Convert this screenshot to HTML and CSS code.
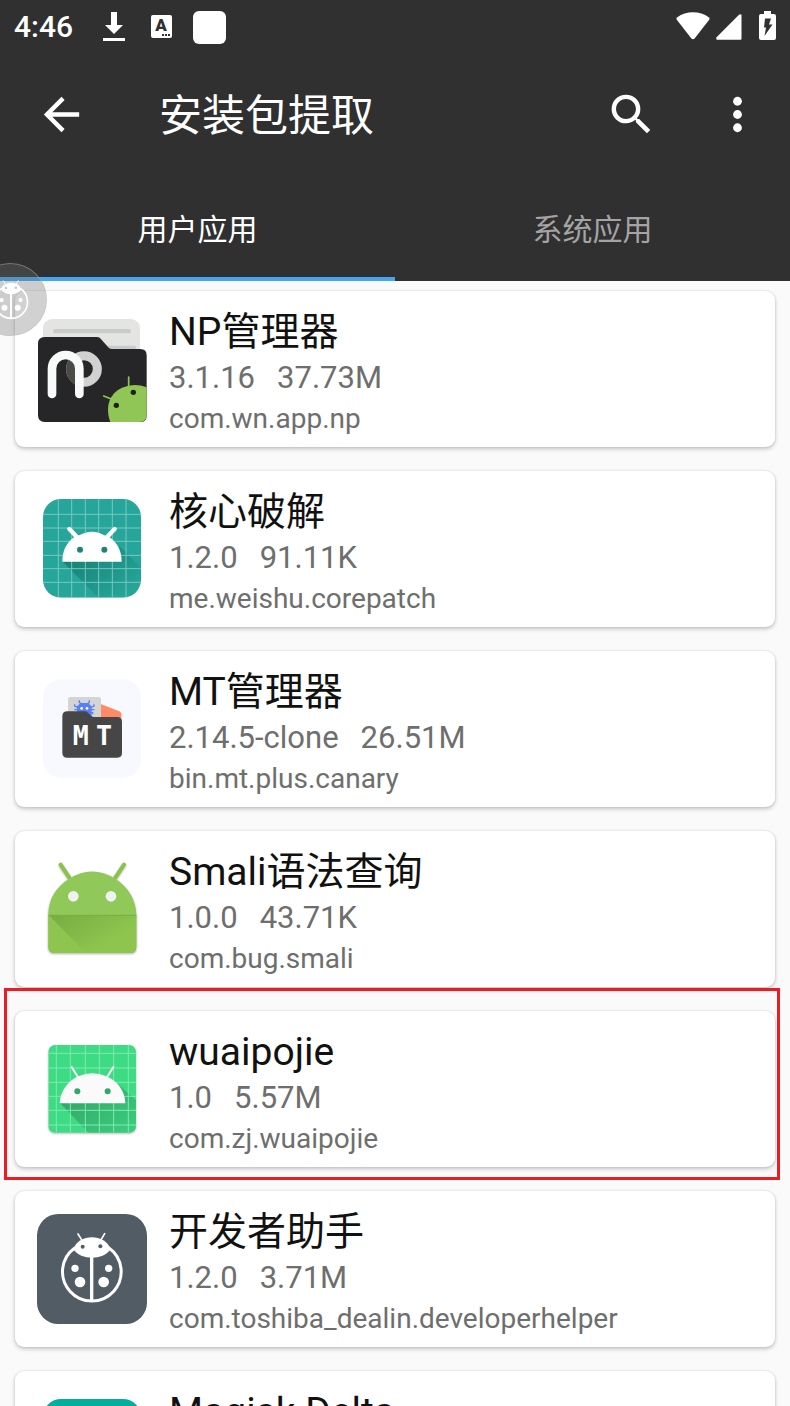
FILE: index.html
```html
<!DOCTYPE html>
<html lang="zh-CN">
<head>
<meta charset="utf-8">
<meta name="viewport" content="width=device-width, initial-scale=1">
<title>安装包提取</title>
<link rel="stylesheet" href="styles.css">
</head>
<body>
<div class="screen">
  <header class="header">
    <div class="status">
      <span class="clock">4:46</span>
      <svg class="st-download" viewBox="0 0 24 34" width="24" height="34" aria-hidden="true"><path fill="#fff" d="M9 2h6v13h6l-9 9-9-9h6zM1 28h22v3H1z"/></svg>
      <svg class="st-lang" viewBox="0 0 21 34" width="21" height="34" aria-hidden="true"><rect y="5" width="21" height="23" rx="2" fill="#fff"/><text x="10" y="21" class="lang-letter">A</text><path fill="#303030" d="M11 24h2v2h-2zM14 24h2v2h-2zM17 24h2v2h-2z"/></svg>
      <span class="st-square"></span>
      <span class="spacer"></span>
      <svg class="st-wifi" viewBox="0 0 34 34" width="34" height="34" aria-hidden="true"><path fill="#fff" d="M17 29.200Q16 29.200 15.200 28.200L.8 9.800Q0 8.600 1 7.600C6 3.800 11 2.300 17 2.300S28 3.800 33 7.600Q34 8.600 33.200 9.800L18.800 28.200Q18 29.200 17 29.200z"/></svg>
      <svg class="st-signal" viewBox="0 0 26 34" width="26" height="34" aria-hidden="true"><path fill="#fff" d="M25.500 6v22.500q0 1.300-1 1.300H1q-.7 0-.7-.8v-1.500L23 4.800q1.500-1 2.500 0z"/></svg>
      <svg class="st-battery" viewBox="0 0 17 34" width="17" height="34" aria-hidden="true"><path fill="#fff" d="M5 1h7v3h3q2 0 2 2v22q0 2-2 2H2q-2 0-2-2V6q0-2 2-2h3z"/><path fill="#303030" d="M6 8.500h6l-2 6h3.500L5.500 26 7 17.500H5z"/></svg>
    </div>
    <div class="toolbar">
      <button class="icon-btn" type="button" aria-label="返回"><svg viewBox="0 0 24 24" width="53" height="53"><path fill="#fff" d="M20 11H7.830l5.590-5.590L12 4l-8 8 8 8 1.410-1.410L7.830 13H20z"/></svg></button>
      <h1 class="title">安装包提取</h1>
      <button class="icon-btn" type="button" aria-label="搜索"><svg viewBox="0 0 24 24" width="53" height="53"><path fill="#fff" d="M15.500 14h-.79l-.28-.27A6.471 6.471 0 0 0 16 9.500 6.500 6.500 0 1 0 9.500 16c1.610 0 3.090-.59 4.230-1.570l.27.280v.79l5 4.990L20.490 19l-4.990-5zm-6 0C7.010 14 5 11.990 5 9.500S7.010 5 9.500 5 14 7.010 14 9.500 11.990 14 9.500 14z"/></svg></button>
      <button class="icon-btn more" type="button" aria-label="更多"><svg viewBox="0 0 24 24" width="53" height="53" fill="#fff"><circle cx="12" cy="6" r="2"/><circle cx="12" cy="12" r="2"/><circle cx="12" cy="18" r="2"/></svg></button>
    </div>
    <nav class="tabs">
      <button class="tab active" type="button">用户应用</button>
      <button class="tab" type="button">系统应用</button>
    </nav>
  </header>

  <main class="content">
    <ul class="list">
      <li class="card">
        <svg class="app-icon" viewBox="111 177 330 330" aria-hidden="true">
          <rect x="129" y="192" width="291" height="160" rx="27" fill="#e4e5e3"/>
          <rect x="159" y="222" width="234" height="13" rx="6" fill="#c8cccb"/>
          <rect x="280" y="272" width="128" height="13" rx="6" fill="#c8cccb"/>
          <path fill="#262628" d="M134 246H292q6 0 10 5l24 27q4 4 10 4h85q19 0 19 19v181q0 19-19 19H134q-20 0-20-20V266q0-20 20-20z"/>
          <circle cx="252" cy="342" r="40" fill="none" stroke="#d1d1d1" stroke-width="27"/>
          <path d="M201 326a54 54 0 0 1 12-21q13 13 13 34v50a54 54 0 0 1-25-63z" fill="#4b4a47"/>
          <path d="M156 417v-76a41 41 0 0 1 82 0v76" fill="none" stroke="#f8faf9" stroke-width="26" stroke-linecap="round"/>
          <path fill="#90c655" d="M440 397v84q0 20-20 20h-89c-17-46-2-86 35-103q37-16 74-1z"/>
          <path d="M386 393v-27M334 432l-23-9" stroke="#90c655" stroke-width="5" stroke-linecap="round"/>
          <circle cx="400" cy="412" r="8" fill="#1d201b"/><circle cx="349" cy="451" r="8" fill="#1d201b"/>
        </svg>
        <div class="info"><h2 class="name">NP管理器</h2><p class="meta"><span>3.1.16</span><span>37.73M</span></p><p class="pkg">com.wn.app.np</p></div>
      </li>
      <li class="card">
        <svg class="app-icon" viewBox="51 42 330 330" aria-hidden="true">
          <defs>
            <linearGradient id="shade-teal" x1="0" y1="0" x2=".8" y2=".8"><stop offset="0" stop-color="#004d40" stop-opacity=".5"/><stop offset="1" stop-color="#004d40" stop-opacity="0"/></linearGradient>
            <clipPath id="clip-teal"><rect x="69" y="57" width="294" height="296" rx="54"/></clipPath>
          </defs>
          <g clip-path="url(#clip-teal)">
            <path fill="#26a69a" d="M69 57h294v296H69z"/>
            <path fill="url(#shade-teal)" d="M128 245h177l-8-48 80 80v100H260z"/>
            <path stroke="#78c7bf" stroke-width="3" fill="none" d="M115 57v296M155 57v296M196 57v296M236 57v296M277 57v296M318 57v296M69 103h294M69 144h294M69 184h294M69 226h294M69 266h294M69 307h294"/>
          </g>
          <path fill="#fff" d="M127 245c0-36 14-57 35-73l32-13q22-7 44 0l33 14c22 17 34 40 34 72z"/>
          <path stroke="#fff" stroke-width="13" stroke-linecap="round" d="M148 147l22 23M284 147l-22 23"/>
          <circle cx="180" cy="209" r="9" fill="#1f8278"/><circle cx="253" cy="209" r="9" fill="#1f8278"/>
        </svg>
        <div class="info"><h2 class="name">核心破解</h2><p class="meta"><span>1.2.0</span><span>91.11K</span></p><p class="pkg">me.weishu.corepatch</p></div>
      </li>
      <li class="card">
        <svg class="app-icon" viewBox="51 42 330 330" aria-hidden="true">
          <rect x="69" y="58" width="294" height="295" rx="54" fill="#f7f9fe"/>
          <path fill="#ff8a65" d="M240 131l58 23q6 3 6 9v12h-64z"/>
          <rect x="144" y="111" width="99" height="70" rx="7" fill="#d4d4d4"/>
          <path fill="none" stroke="#5580f6" stroke-width="4" d="M178 121v6l6 5M208 121v6l-6 5M164 133v5l8 4M222 133v5l-8 4M163 149h60M168 163v-5h50v5"/>
          <path fill="#5580f6" d="M182 129h22l11 10v30h-44v-30z"/>
          <circle cx="185" cy="145" r="4" fill="#fff"/><circle cx="201" cy="145" r="4" fill="#fff"/>
          <path fill="#464646" d="M142 154h53q5 0 9 4l10 10q3 3 8 3h70q14 0 14 14v94q0 14-14 14H142q-15 0-15-15V169q0-15 15-15z"/>
          <text class="mt-letter" x="182" y="256">M</text><text class="mt-letter" x="252" y="256">T</text>
        </svg>
        <div class="info"><h2 class="name">MT管理器</h2><p class="meta"><span>2.14.5-clone</span><span>26.51M</span></p><p class="pkg">bin.mt.plus.canary</p></div>
      </li>
      <li class="card">
        <svg class="app-icon soft-shadow" viewBox="51 42 330 330" aria-hidden="true">
          <defs><linearGradient id="shade-green" x1="0" y1="0" x2="1" y2=".7"><stop offset="0" stop-color="#33691e" stop-opacity=".26"/><stop offset=".8" stop-color="#33691e" stop-opacity="0"/></linearGradient></defs>
          <path d="M122 74l26 39M312 74l-26 39" stroke="#8bc34a" stroke-width="12" stroke-linecap="round"/>
          <path fill="#91c85a" d="M85 225c0-48 24-86 63-109q68-43 138 0c38 24 63 64 63 109v95q0 19-19 19H104q-19 0-19-19z"/>
          <path fill="#8dc54e" d="M85 225h264v95q0 19-19 19H104q-19 0-19-19z"/>
          <path fill="url(#shade-green)" d="M87 226h260v113H197z"/>
          <path d="M85 226h264" stroke="#7cad43" stroke-width="3"/>
          <circle cx="160" cy="169" r="16" fill="#f1f1f1"/><circle cx="273" cy="169" r="16" fill="#f1f1f1"/>
        </svg>
        <div class="info"><h2 class="name">Smali语法查询</h2><p class="meta"><span>1.0.0</span><span>43.71K</span></p><p class="pkg">com.bug.smali</p></div>
      </li>
      <li class="card marked">
        <svg class="app-icon soft-shadow" viewBox="51 42 330 330" aria-hidden="true">
          <defs>
            <linearGradient id="shade-mint" x1="0" y1="0" x2="1" y2="1"><stop offset="0" stop-color="#2a7a55" stop-opacity=".65"/><stop offset="1" stop-color="#2a7a55" stop-opacity=".1"/></linearGradient>
            <clipPath id="clip-mint"><rect x="85" y="75" width="263" height="263" rx="20"/></clipPath>
          </defs>
          <g clip-path="url(#clip-mint)">
            <path fill="#3ddc84" d="M85 75h263v263H85z"/>
            <path fill="url(#shade-mint)" d="M120 249h196l-20-55 60 54v95H210z"/>
            <path stroke="#82e9af" stroke-width="3" fill="none" d="M109 75v263M151 75v263M196 75v263M238 75v263M281 75v263M325 75v263M85 100h263M85 144h263M85 187h263M85 229h263M85 271h263M85 315h263"/>
          </g>
          <path fill="#fafafa" d="M119 250c2-37 24-66 56-81q42-18 84 0c34 15 56 44 57 81z"/>
          <path stroke="#fafafa" stroke-width="6" stroke-linecap="round" d="M155 141l19 31M280 141l-19 31"/>
          <circle cx="172" cy="214" r="9" fill="#32a76a"/><circle cx="263" cy="214" r="9" fill="#32a76a"/>
        </svg>
        <div class="info"><h2 class="name">wuaipojie</h2><p class="meta"><span>1.0</span><span>5.57M</span></p><p class="pkg">com.zj.wuaipojie</p></div>
      </li>
      <li class="card">
        <svg class="app-icon" viewBox="51 42 330 330" aria-hidden="true">
          <rect x="51" y="42" width="330" height="330" rx="64" fill="#525c65"/>
          <g id="ladybug">
            <path fill="none" stroke="#fff" stroke-width="9" d="M165 143a88 88 0 1 0 101 0"/>
            <path fill="#fff" d="M160 148c15-48 96-48 112 0-24 34-88 34-112 0z"/>
            <path stroke="#fff" stroke-width="10" d="M215 168v132"/>
            <path stroke="#fff" stroke-width="5" stroke-linecap="round" d="M174 102l12 19M254 101l-12 20"/>
            <g fill="#fff"><circle cx="165" cy="205" r="11"/><circle cx="266" cy="205" r="11"/><circle cx="180" cy="246" r="16"/><circle cx="251" cy="246" r="16"/></g>
          </g>
          <circle cx="188" cy="140" r="6" fill="#525c65"/><circle cx="241" cy="139" r="6" fill="#525c65"/>
        </svg>
        <div class="info"><h2 class="name">开发者助手</h2><p class="meta"><span>1.2.0</span><span>3.71M</span></p><p class="pkg">com.toshiba_dealin.developerhelper</p></div>
      </li>
      <li class="card">
        <svg class="app-icon" viewBox="51 42 330 330" aria-hidden="true"><rect x="69" y="57" width="294" height="294" rx="54" fill="#00af9c"/></svg>
        <div class="info"><h2 class="name">Magisk Delta</h2></div>
      </li>
    </ul>
  </main>

  <button class="bubble" type="button" aria-label="开发者助手">
    <svg viewBox="120 97 190 215" width="36" height="40"><use href="#ladybug"/><circle cx="188" cy="140" r="7" fill="#c4c8cc"/><circle cx="241" cy="139" r="7" fill="#c4c8cc"/></svg>
  </button>
</div>
</body>
</html>
```
FILE: styles.css
```css
* { box-sizing: border-box; }

body {
  margin: 0;
  background: #fafafa;
  font-family: Roboto, "Noto Sans CJK SC", sans-serif;
}

h1, h2, p, ul { margin: 0; padding: 0; font-weight: 400; }

button {
  margin: 0;
  padding: 0;
  border: 0;
  background: none;
  color: inherit;
  font: inherit;
}

svg { display: block; flex: none; }

.screen {
  position: relative;
  height: 100vh;
  overflow: hidden;
}

.header { background: #303030; color: #fff; }

.status {
  display: flex;
  align-items: center;
  height: 54px;
  padding: 0 14px;
}

.clock {
  font-size: 30px;
  line-height: 34px;
  font-weight: 500;
  width: 60px;
}

.st-download { margin-left: 28px; }
.st-lang { margin-left: 25px; }

.lang-letter {
  font: 900 17px Roboto, sans-serif;
  text-anchor: middle;
  fill: #303030;
}

.st-square {
  width: 33px;
  height: 33px;
  margin-left: 21px;
  border-radius: 6px;
  background: #fff;
}

.spacer { flex: 1; }
.st-signal { margin-left: 6px; }
.st-battery { margin-left: 17px; }

.toolbar {
  display: flex;
  align-items: center;
  height: 120px;
  padding: 0 26px 0 35px;
}

.icon-btn { display: flex; }
.more { margin-left: 53px; }

.title {
  flex: 1;
  padding: 4px 0 0 71px;
  font-size: 43px;
  line-height: 60px;
}

.tabs { display: flex; height: 107px; }

.tab {
  flex: 1;
  padding-top: 2px;
  border-bottom: 4px solid transparent;
  color: #a4a4a4;
  font-size: 30px;
}

.tab.active { border-color: #42a5f5; color: #fff; }

.content { padding: 10px 15px 0; }

.list {
  display: flex;
  flex-direction: column;
  gap: 24px;
  list-style: none;
}

.card {
  position: relative;
  display: flex;
  align-items: center;
  gap: 22px;
  min-height: 156px;
  padding: 0 22px;
  border-radius: 9px;
  background: #fff;
  box-shadow: 0 2px 4px rgba(0, 0, 0, .22), 0 0 2px rgba(0, 0, 0, .12);
}

.marked::after {
  content: "";
  position: absolute;
  inset: -23px -5px -13px -11px;
  border: 3px solid #ed1c24;
}

.app-icon { width: 110px; height: 110px; }
.soft-shadow { filter: drop-shadow(0 1px 1px rgba(0, 0, 0, .3)); }

.mt-letter {
  font: 700 80px "DejaVu Sans Mono", monospace;
  text-anchor: middle;
  fill: #fff;
}

.info {
  align-self: flex-start;
  min-width: 0;
  padding-top: 17px;
}

.name {
  color: #111;
  font-size: 39px;
  line-height: 48px;
}

.meta {
  display: flex;
  gap: 22px;
  color: #6e6e6e;
  font-size: 31px;
  line-height: 43px;
}

.pkg {
  color: #6e6e6e;
  font-size: 28px;
  line-height: 40px;
}

.bubble {
  position: absolute;
  top: 263px;
  left: -26px;
  display: flex;
  align-items: center;
  justify-content: center;
  width: 73px;
  height: 73px;
  border: 1px solid rgba(190, 190, 190, .4);
  border-radius: 50%;
  background: rgba(112, 112, 112, .32);
}
```
